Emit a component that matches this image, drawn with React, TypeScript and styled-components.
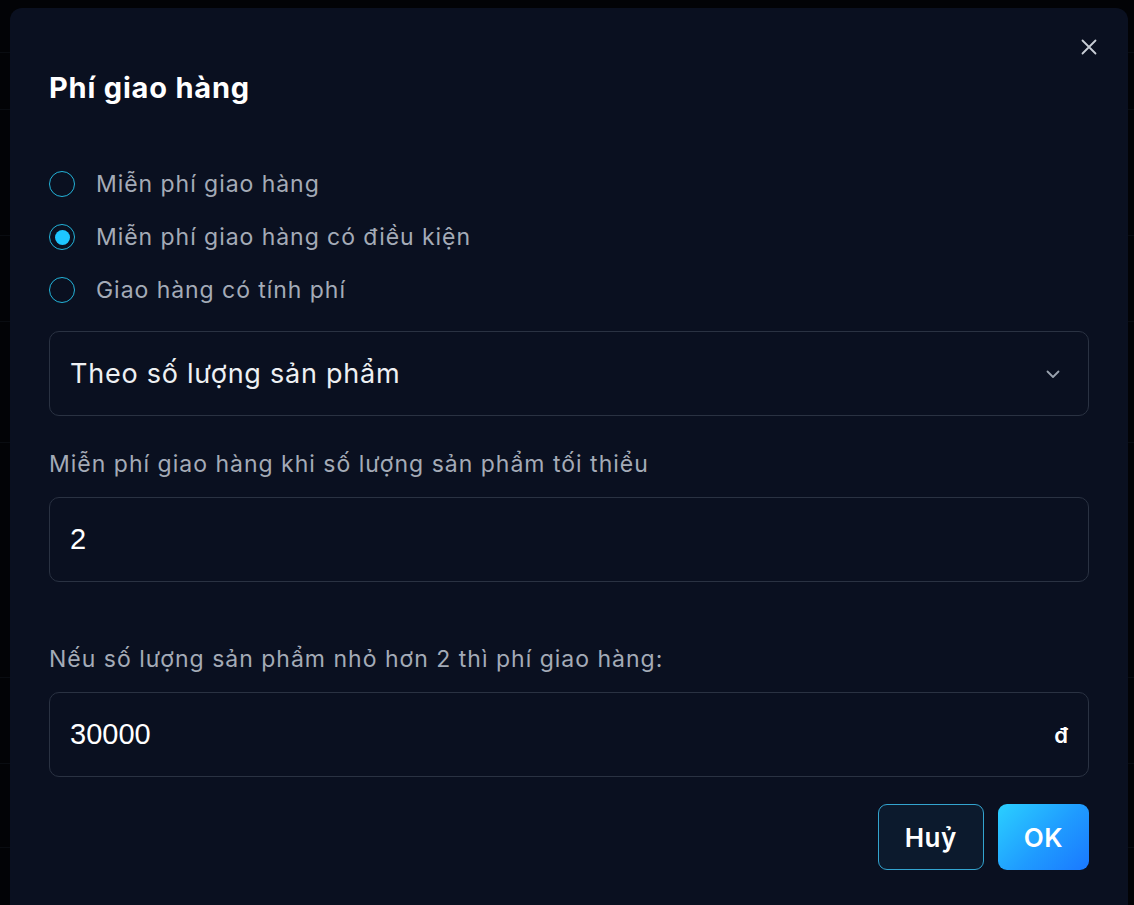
import React from "react";
import styled, { createGlobalStyle } from "styled-components";

const GlobalStyle = createGlobalStyle`
  html, body { margin: 0; padding: 0; }
  body {
    background: #04060a;
    font-family: "Inter", "Noto Sans", sans-serif;
    overflow: hidden;
    width: 1134px;
    height: 905px;
  }
`;

const Page = styled.div`
  position: relative;
  width: 1134px;
  height: 905px;
  overflow: hidden;
  background: #04060a;
`;

const BgTable = styled.div`
  display: flex;
  flex-direction: column;
`;

const BgRow = styled.div<{ $h: number }>`
  height: ${(p) => p.$h}px;
  border-bottom: 1px solid #0e131b;
`;

const Overlay = styled.div`
  position: absolute;
  inset: 0;
  background: rgba(0, 0, 0, 0.35);
  display: flex;
  align-items: flex-start;
  justify-content: flex-start;
  padding: 8px 0 0 10px;
`;

const Modal = styled.div`
  position: relative;
  width: 1118px;
  min-height: 940px;
  box-sizing: border-box;
  background: #0a1020;
  border-radius: 12px;
  padding: 60px 39px 0 39px;
  display: flex;
  flex-direction: column;
`;

const CloseBtn = styled.button`
  position: absolute;
  top: 26px;
  right: 26px;
  width: 26px;
  height: 26px;
  padding: 0;
  border: none;
  background: transparent;
  display: flex;
  align-items: center;
  justify-content: center;
  cursor: pointer;
`;

const Title = styled.h2`
  margin: 0;
  font-size: 29px;
  line-height: 40px;
  font-weight: 700;
  color: #ffffff;
  letter-spacing: 0.8px;
`;

const RadioGroup = styled.div`
  display: flex;
  flex-direction: column;
  gap: 23px;
  margin-top: 61px;
`;

const RadioRow = styled.label`
  display: flex;
  align-items: center;
  gap: 21px;
  height: 30px;
  cursor: pointer;
`;

const RadioCircle = styled.span<{ $checked?: boolean }>`
  width: 26px;
  height: 26px;
  box-sizing: border-box;
  border-radius: 50%;
  border: 1.5px solid #23b3d9;
  display: flex;
  align-items: center;
  justify-content: center;
  flex-shrink: 0;
  &::after {
    content: "";
    display: ${(p) => (p.$checked ? "block" : "none")};
    width: 15px;
    height: 15px;
    border-radius: 50%;
    background: #1ec6ff;
  }
`;

const RadioText = styled.span`
  font-size: 23px;
  letter-spacing: 0.95px;
  color: #a4abb7;
  font-weight: 400;
`;

const Field = styled.div<{ $mt: number }>`
  margin-top: ${(p) => p.$mt}px;
  height: 85px;
  box-sizing: border-box;
  border: 1px solid #2a3242;
  border-radius: 10px;
  display: flex;
  align-items: center;
  justify-content: space-between;
  padding: 0 20px;
  background: #0a1020;
`;

const SelectText = styled.span`
  font-size: 27px;
  letter-spacing: 0.75px;
  color: #eef0f3;
  font-weight: 400;
`;

const ValueText = styled.span`
  font-family: "Liberation Sans", Arial, sans-serif;
  font-size: 29px;
  color: #ffffff;
`;

const Suffix = styled.span`
  font-size: 22px;
  font-weight: 600;
  color: #ffffff;
`;

const Label = styled.div<{ $mt: number }>`
  margin-top: ${(p) => p.$mt}px;
  font-size: 23px;
  letter-spacing: 1px;
  line-height: 32px;
  color: #a4abb7;
`;

const Footer = styled.div`
  margin-top: 27px;
  display: flex;
  justify-content: flex-end;
  gap: 14px;
`;

const Button = styled.button<{ $primary?: boolean }>`
  height: 66px;
  box-sizing: border-box;
  border-radius: 9px;
  font-family: "Inter", sans-serif;
  font-size: 26px;
  font-weight: 600;
  letter-spacing: 0.5px;
  color: #ffffff;
  cursor: pointer;
  padding: 0 26px;
  border: ${(p) => (p.$primary ? "none" : "1.5px solid #33a4cf")};
  background: ${(p) =>
    p.$primary
      ? "linear-gradient(135deg, #2bd0ff 0%, #1f9bff 55%, #1a78ff 100%)"
      : "#0c1a2d"};
`;

const rows = [52, 56, 125, 85, 120, 234, 85, 83, 70];

export default function App() {
  return (
    <Page>
      <GlobalStyle />
      <BgTable>
        {rows.map((h, i) => (
          <BgRow key={i} $h={h} />
        ))}
      </BgTable>
      <Overlay>
        <Modal>
          <CloseBtn aria-label="close">
            <svg width="18" height="18" viewBox="0 0 18 18" fill="none">
              <path d="M2.5 2.5L15.5 15.5M15.5 2.5L2.5 15.5" stroke="#c9ced6" strokeWidth="1.8" strokeLinecap="round" />
            </svg>
          </CloseBtn>
          <Title>Phí giao hàng</Title>
          <RadioGroup>
            <RadioRow>
              <RadioCircle />
              <RadioText>Miễn phí giao hàng</RadioText>
            </RadioRow>
            <RadioRow>
              <RadioCircle $checked />
              <RadioText>Miễn phí giao hàng có điều kiện</RadioText>
            </RadioRow>
            <RadioRow>
              <RadioCircle />
              <RadioText>Giao hàng có tính phí</RadioText>
            </RadioRow>
          </RadioGroup>
          <Field $mt={26}>
            <SelectText>Theo số lượng sản phẩm</SelectText>
            <svg width="18" height="18" viewBox="0 0 18 18" fill="none" style={{ marginRight: 6 }}>
              <path d="M3.5 6.5L9 12L14.5 6.5" stroke="#9aa2ae" strokeWidth="1.8" strokeLinecap="round" strokeLinejoin="round" />
            </svg>
          </Field>
          <Label $mt={32}>Miễn phí giao hàng khi số lượng sản phẩm tối thiểu</Label>
          <Field $mt={17}>
            <ValueText>2</ValueText>
          </Field>
          <Label $mt={61}>Nếu số lượng sản phẩm nhỏ hơn 2 thì phí giao hàng:</Label>
          <Field $mt={17}>
            <ValueText>30000</ValueText>
            <Suffix>đ</Suffix>
          </Field>
          <Footer>
            <Button>Huỷ</Button>
            <Button $primary>OK</Button>
          </Footer>
        </Modal>
      </Overlay>
    </Page>
  );
}
